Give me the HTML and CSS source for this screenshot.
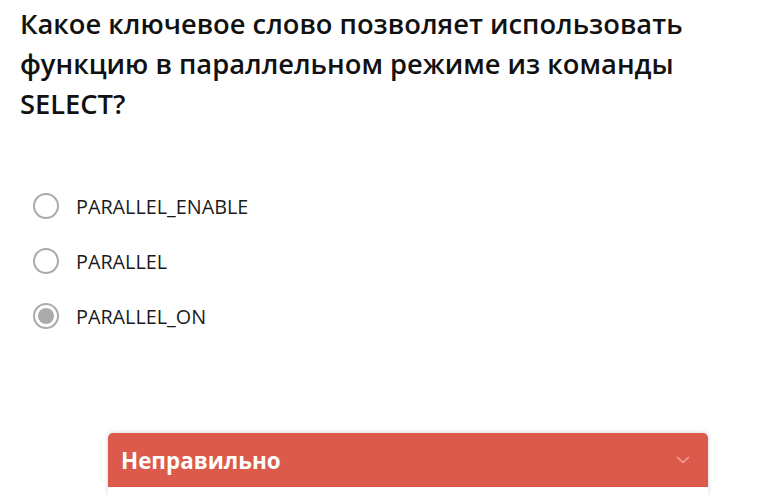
FILE: index.html
```html
<!DOCTYPE html>
<html lang="ru">
<head>
<meta charset="utf-8">
<link rel="stylesheet" href="styles.css">
</head>
<body>
<div class="page">
  <h1 class="question">Какое ключевое слово позволяет использовать функцию в параллельном режиме из команды SELECT?</h1>
  <ul class="options">
    <li class="option"><span class="radio"></span><span class="label">PARALLEL_ENABLE</span></li>
    <li class="option"><span class="radio"></span><span class="label">PARALLEL</span></li>
    <li class="option"><span class="radio checked"></span><span class="label">PARALLEL_ON</span></li>
  </ul>
  <div class="result">
    <div class="result-head">
      <span class="result-title">Неправильно</span>
      <svg class="chev" width="14" height="8" viewBox="0 0 14 8"><path d="M1 1 L7 6.5 L13 1" fill="none" stroke="#f2a79d" stroke-width="1.4"/></svg>
    </div>
    <div class="result-body"></div>
  </div>
</div>
</body>
</html>
```
FILE: styles.css
```css
html, body {
  margin: 0;
  padding: 0;
  background: #fff;
}
body {
  font-family: "Open Sans", "Liberation Sans", sans-serif;
  color: #111;
  overflow: hidden;
}
.page {
  padding: 4px 20px 0 20px;
}
.question {
  margin: 0;
  font-size: 27.3px;
  font-weight: 600;
  line-height: 40px;
  color: #111;
  width: 700px;
}
.options {
  list-style: none;
  margin: 69px 0 0 0;
  padding: 0 0 0 13px;
  display: flex;
  flex-direction: column;
  gap: 29px;
}
.option {
  display: flex;
  align-items: center;
  gap: 17px;
  height: 26px;
}
.radio {
  box-sizing: border-box;
  width: 26px;
  height: 26px;
  border: 2px solid #ababab;
  border-radius: 50%;
  display: flex;
  align-items: center;
  justify-content: center;
}
.radio.checked::after {
  content: "";
  width: 16px;
  height: 16px;
  border-radius: 50%;
  background: #ababab;
}
.label {
  font-size: 19.8px;
  color: #1a1a1a;
}
.result {
  margin: 104px 0 0 88px;
  width: 600px;
  border-radius: 5px 5px 0 0;
  box-shadow: 0 0 5px rgba(0,0,0,0.18);
  overflow: hidden;
  background: #fff;
}
.result-head {
  background: #db5a4b;
  height: 54px;
  display: flex;
  align-items: center;
  justify-content: space-between;
  padding: 0 18px 0 13px;
}
.result-title {
  color: #fff;
  font-weight: 700;
  font-size: 22.4px;
}
.chev {
  display: block;
}
.result-body {
  height: 8px;
}
```
